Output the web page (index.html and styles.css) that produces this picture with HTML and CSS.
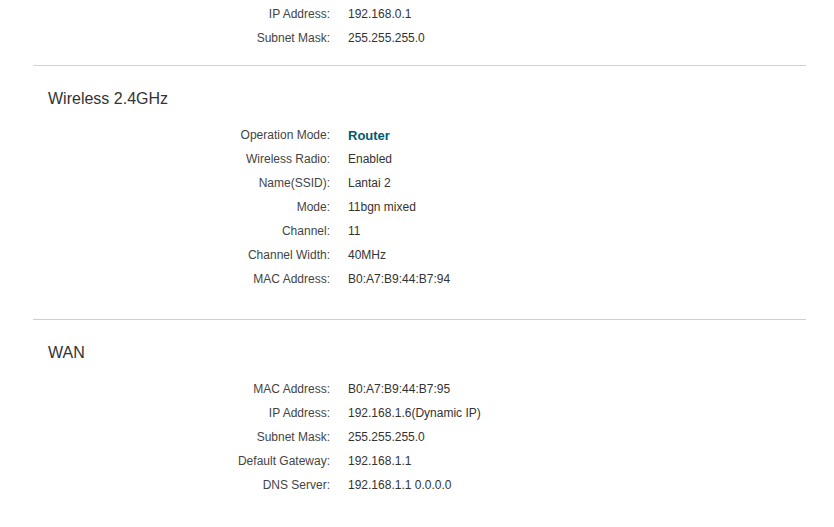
FILE: index.html
```html
<!DOCTYPE html>
<html>
<head>
<meta charset="utf-8">
<link rel="stylesheet" href="styles.css">
</head>
<body>
<div class="page">
  <div class="section section-top">
    <div class="rows">
      <div class="row"><span class="label">IP Address:</span><span class="value">192.168.0.1</span></div>
      <div class="row"><span class="label">Subnet Mask:</span><span class="value">255.255.255.0</span></div>
    </div>
  </div>
  <div class="divider"></div>
  <div class="section">
    <h2 class="title">Wireless 2.4GHz</h2>
    <div class="rows">
      <div class="row"><span class="label">Operation Mode:</span><span class="value strong">Router</span></div>
      <div class="row"><span class="label">Wireless Radio:</span><span class="value">Enabled</span></div>
      <div class="row"><span class="label">Name(SSID):</span><span class="value">Lantai 2</span></div>
      <div class="row"><span class="label">Mode:</span><span class="value">11bgn mixed</span></div>
      <div class="row"><span class="label">Channel:</span><span class="value">11</span></div>
      <div class="row"><span class="label">Channel Width:</span><span class="value">40MHz</span></div>
      <div class="row"><span class="label">MAC Address:</span><span class="value">B0:A7:B9:44:B7:94</span></div>
    </div>
  </div>
  <div class="divider"></div>
  <div class="section">
    <h2 class="title">WAN</h2>
    <div class="rows">
      <div class="row"><span class="label">MAC Address:</span><span class="value">B0:A7:B9:44:B7:95</span></div>
      <div class="row"><span class="label">IP Address:</span><span class="value">192.168.1.6(Dynamic IP)</span></div>
      <div class="row"><span class="label">Subnet Mask:</span><span class="value">255.255.255.0</span></div>
      <div class="row"><span class="label">Default Gateway:</span><span class="value">192.168.1.1</span></div>
      <div class="row"><span class="label">DNS Server:</span><span class="value">192.168.1.1 0.0.0.0</span></div>
    </div>
  </div>
</div>
</body>
</html>
```
FILE: styles.css
```css
html, body {
  margin: 0;
  padding: 0;
  background: #fff;
}
body {
  font-family: "Liberation Sans", Arial, sans-serif;
  font-size: 12px;
  color: #333;
}
.page {
  padding-top: 2px;
}
.section {
  padding-bottom: 28px;
}
.section-top {
  padding-bottom: 15px;
}
.divider {
  height: 1px;
  background: #d0d0d0;
  margin: 0 28px 0 33px;
}
.title {
  margin: 21px 0 12px 48px;
  font-size: 16px;
  font-weight: normal;
  line-height: 24px;
  color: #333;
}
.rows {
  display: flex;
  flex-direction: column;
}
.row {
  display: flex;
  height: 24px;
  align-items: center;
}
.label {
  width: 330px;
  text-align: right;
  flex-shrink: 0;
  color: #444;
}
.value {
  margin-left: 18px;
}
.strong {
  font-weight: bold;
  font-size: 13px;
  color: #005a6e;
}
```
